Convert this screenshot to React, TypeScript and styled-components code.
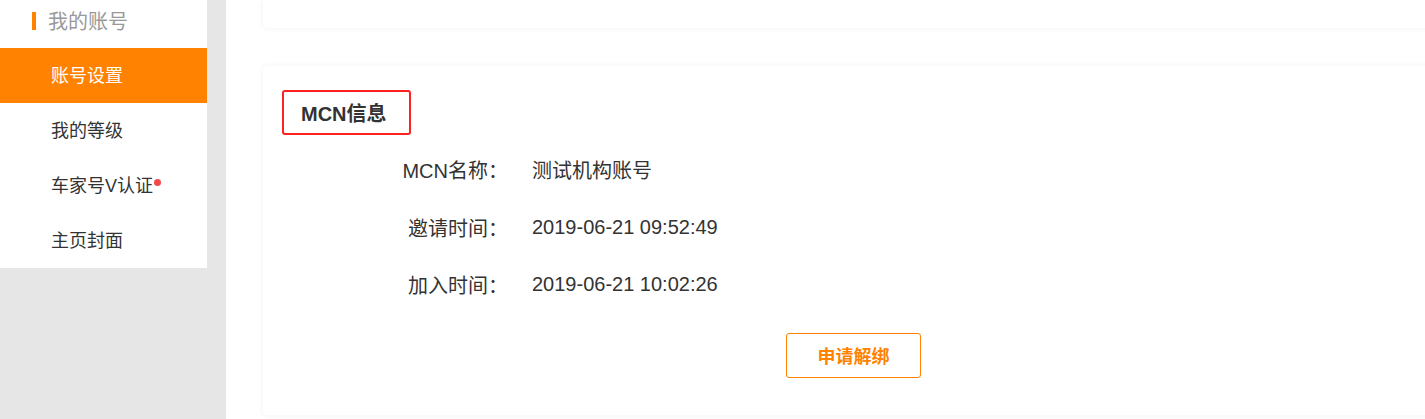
import * as React from 'react';
import styled, { createGlobalStyle } from 'styled-components';

const GlobalStyle = createGlobalStyle`
  html, body {
    margin: 0;
    padding: 0;
    overflow: hidden;
    background: #e6e6e6;
  }
  body {
    font-family: 'Liberation Sans', 'Noto Sans CJK SC', Arial, sans-serif;
    color: #333;
  }
`;

const Page = styled.div`
  display: flex;
  width: 1425px;
  height: 419px;
  overflow: hidden;
`;

const SideColumn = styled.div`
  width: 226px;
  flex-shrink: 0;
  background: #e6e6e6;
`;

const SideMenu = styled.div`
  width: 207px;
  background: #fff;
`;

const MenuHeading = styled.div`
  display: flex;
  align-items: center;
  height: 26px;
  padding: 7px 0 15px 32px;
  font-size: 20px;
  color: #999;
  &::before {
    content: '';
    display: block;
    width: 4px;
    height: 18px;
    background: #ff8200;
    margin: 2px 12px 0 0;
  }
`;

const MenuItem = styled.div<{ $active?: boolean }>`
  display: flex;
  align-items: center;
  height: 55px;
  box-sizing: border-box;
  padding: 0 0 3px 51px;
  font-size: 18px;
  color: ${(p) => (p.$active ? '#fff' : '#333')};
  background: ${(p) => (p.$active ? '#ff8200' : '#fff')};
`;

const RedDot = styled.span`
  display: inline-block;
  width: 7px;
  height: 7px;
  border-radius: 50%;
  background: #f24a4a;
  margin: 0 0 3px 1px;
`;

const Main = styled.div`
  flex: 1;
  background: #fff;
  padding-left: 37px;
  overflow: hidden;
`;

const Card = styled.div`
  width: 1180px;
  background: #fff;
  border-radius: 4px;
  box-shadow: 0 0 6px rgba(0, 0, 0, 0.06);
`;

const TopCard = styled(Card)`
  height: 28px;
  border-radius: 0 0 4px 4px;
  margin-bottom: 38px;
`;

const InfoCard = styled(Card)`
  height: 349px;
  padding: 24px 19px 0;
  box-sizing: border-box;
`;

const TitleBox = styled.div`
  display: inline-flex;
  align-items: center;
  height: 41px;
  padding: 0 22px 0 17px;
  border: 2px solid #ff2020;
  border-radius: 3px;
  font-size: 20px;
  font-weight: bold;
  color: #333;
`;

const InfoList = styled.div`
  display: flex;
  flex-direction: column;
  margin-top: 6px;
`;

const InfoRow = styled.div`
  display: flex;
  align-items: center;
  height: 57.5px;
  font-size: 20px;
`;

const Label = styled.div`
  width: 226px;
  text-align: right;
  color: #333;
`;

const Value = styled.div`
  margin-left: 24px;
  color: #333;
`;

const ButtonRow = styled.div`
  padding: 19px 0 0 504px;
`;

const UnbindButton = styled.button`
  width: 135px;
  height: 45px;
  border: 1px solid #ff8200;
  border-radius: 3px;
  background: #fff;
  color: #ff8200;
  font-family: inherit;
  font-size: 18px;
  font-weight: bold;
  cursor: pointer;
`;

const menu = [
  { label: '账号设置', active: true },
  { label: '我的等级' },
  { label: '车家号V认证', dot: true },
  { label: '主页封面' },
];

const info = [
  { label: 'MCN名称：', value: '测试机构账号' },
  { label: '邀请时间：', value: '2019-06-21 09:52:49' },
  { label: '加入时间：', value: '2019-06-21 10:02:26' },
];

const App = () => {
  return (
    <>
      <GlobalStyle />
      <Page>
        <SideColumn>
          <SideMenu>
            <MenuHeading>我的账号</MenuHeading>
            {menu.map((m) => (
              <MenuItem key={m.label} $active={m.active}>
                {m.label}
                {m.dot && <RedDot />}
              </MenuItem>
            ))}
          </SideMenu>
        </SideColumn>
        <Main>
          <TopCard />
          <InfoCard>
            <TitleBox>MCN信息</TitleBox>
            <InfoList>
              {info.map((row) => (
                <InfoRow key={row.label}>
                  <Label>{row.label}</Label>
                  <Value>{row.value}</Value>
                </InfoRow>
              ))}
            </InfoList>
            <ButtonRow>
              <UnbindButton>申请解绑</UnbindButton>
            </ButtonRow>
          </InfoCard>
        </Main>
      </Page>
    </>
  );
};

export default App;
